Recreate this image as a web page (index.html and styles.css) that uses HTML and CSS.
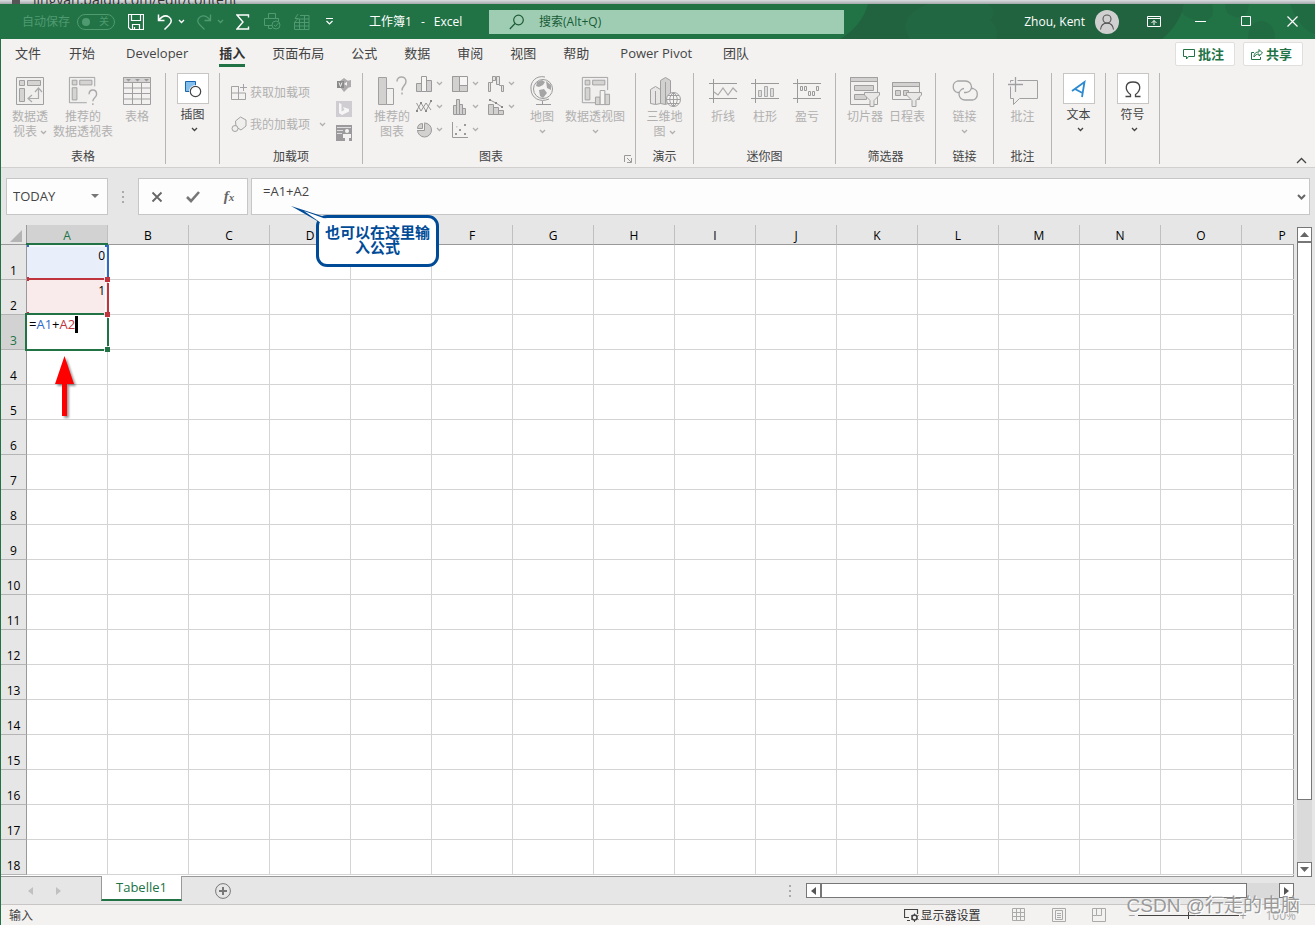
FILE: index.html
```html
<!DOCTYPE html>
<html lang="zh-CN">
<head>
<meta charset="utf-8">
<title>工作簿1 - Excel</title>
<link rel="stylesheet" href="styles.css">
</head>
<body>
<svg class="defs" aria-hidden="true">
  <symbol id="chev" viewBox="0 0 7 5"><path d="M1 1l2.500 2.500L6 1" fill="none" stroke="currentColor" stroke-width="1.300"/></symbol>
  <symbol id="funnel" viewBox="0 0 16 15"><path d="M.5.5h15v2.500l-5.500 5.500v6H6v-6L.5 3z" fill="#e9e8e7" stroke="#a3a3a3"/></symbol>
</svg>
<div class="backdrop"><i></i><span>jingyan.baidu.com/edit/content</span></div>

<header class="titlebar">
  <svg class="pattern" viewBox="0 0 475 35" preserveAspectRatio="xMaxYMid slice" aria-hidden="true"><path d="M0 35Q22 22 28 0h316q-4 20-22 35z" fill="#21633f"/><path d="M70 35q-14-22 18-35h60q10 8 2 16 10 10 6 19z" fill="#216b42" opacity=".6"/><path d="M340 0h32q5 20-15 16-17-2-17-16zM385 0h24q-2 16-14 13-10-2-10-13zM408 35q0-18 14-18 13 2 13 18zM450 0h25v30q-15-4-25-30z" fill="#21633f" opacity=".5"/></svg>
  <span class="autosave">自动保存</span>
  <button class="toggle" aria-label="自动保存"><i></i>关</button>
  <div class="quick">
    <button aria-label="保存"><svg width="16" height="16" fill="none" stroke="#fff"><path d="M.5.500h15v15h-13l-2-2zM3.500.500v6h9v-6M4.500 15.500v-5h7v5M6.500 15v-2" stroke-width="1.200"/></svg></button>
    <button aria-label="撤消"><svg width="16" height="16" fill="none" stroke="#fff" stroke-width="1.500"><path d="M1.500.500v6h6M1.500 6.500C5 2 9 1 12 3c3 2 3 5 0 8l-4.500 4.500"/></svg></button>
    <button aria-label="撤消列表"><svg width="7" height="5"><use href="#chev"/></svg></button>
    <button class="off" aria-label="恢复"><svg width="16" height="16" fill="none" stroke="currentColor" stroke-width="1.300"><path d="M14.500.500v6h-6M14.500 6.500C11 2 7 1 4 3c-3 2-3 5 0 8l4.500 4.500"/></svg></button>
    <button class="off" aria-label="恢复列表"><svg width="7" height="5"><use href="#chev"/></svg></button>
    <button aria-label="求和"><svg width="14" height="16" fill="none" stroke="#fff" stroke-width="1.400"><path d="M12.500 3.500V1H1l6 7-6 7h11.500v-2.500"/></svg></button>
    <button class="off" aria-label="打印预览"><svg width="17" height="17" fill="none" stroke="currentColor"><path d="M4.500 5.500v-5h7v5M8 12.500H.500v-7h14v3M4.500 12v3.500H8"/><circle cx="12" cy="12" r="4"/><path d="M10 12l1.500 1.500L14.500 10"/></svg></button>
    <button class="off" aria-label="表格"><svg width="17" height="16" fill="none" stroke="currentColor"><path d="M7 1.500h9v14H1.500V9M1.500 8.500H16M5 5h11M1.500 12H16M6.500 5v10.500M11.500 1.500v14M5 0L2 4.500h3L1 9"/></svg></button>
    <button aria-label="自定义快速访问工具栏"><svg width="9" height="7" fill="none" stroke="#fff"><path d="M1 .500h7M1.500 3l3 3 3-3" stroke-width="1.200"/></svg></button>
  </div>
  <h1 class="doc"><span>工作簿1</span><span>-</span><span>Excel</span></h1>
  <label class="search"><svg width="16" height="16" fill="none" stroke="#1d5c37" stroke-width="1.200"><circle cx="9.500" cy="6" r="4.800"/><path d="M6 9.500L.800 15"/></svg><input type="text" aria-label="搜索" placeholder="搜索(Alt+Q)"></label>
  <div class="user"><span>Zhou, Kent</span><svg width="24" height="24"><circle cx="12" cy="12" r="12" fill="#d0d0d0"/><g fill="none" stroke="#555" stroke-width="1.100"><circle cx="12" cy="9" r="4"/><path d="M5.500 19.500c1-8.500 12-8.500 13 0"/></g></svg></div>
  <div class="winbtns">
    <button aria-label="功能区显示选项"><svg width="14" height="12" fill="none" stroke="#fff"><path d="M.500.500h13v10H.500zM.500 2.500h13M7 9V4.500M4.500 7L7 4.500 9.500 7"/></svg></button>
    <button aria-label="最小化"><svg width="11" height="11" stroke="#fff"><path d="M0 5.500h11"/></svg></button>
    <button aria-label="最大化"><svg width="11" height="11" fill="none" stroke="#fff"><path d="M.500.500h9v9h-9z"/></svg></button>
    <button aria-label="关闭"><svg width="11" height="11" stroke="#fff"><path d="M.500.500l10 10M10.500.500l-10 10" stroke-width="1.200"/></svg></button>
  </div>
</header>

<main class="app">
  <nav class="tabs">
    <button>文件</button><button>开始</button><button>Developer</button><button class="active">插入</button><button>页面布局</button><button>公式</button><button>数据</button><button>审阅</button><button>视图</button><button>帮助</button><button>Power Pivot</button><button>团队</button>
    <div class="share">
      <button><svg width="12" height="12" fill="none" stroke="#217346"><path d="M.500 1.500h11v7H5.500L3.500 11V8.500h-3z"/></svg>批注</button>
      <button><svg width="12" height="12" fill="none" stroke="#217346"><path d="M3 4.500H.500v7h9V9M3 9c0-4 2-5 5-5V1.500L11.500 5 8 8V6C6 6 4 7 3 9z"/></svg>共享</button>
    </div>
  </nav>

  <section class="ribbon">
    <div class="group g-table">
      <div class="tools">
        <button class="big w44"><svg width="30" height="30" fill="#d5d4d3" stroke="#a0a0a0"><path d="M1.500 1.500h27v27h-27z" fill="#f0efee"/><path d="M4.500 4.500h5v5h-5zM12.500 4.500h13v5h-13zM4.500 12.500h5v13h-5z"/><path d="M14 22.500h9.500V13M17 19l-4 3.500 4 3.500M20 16l3.500-4 3.500 4" fill="none" stroke="#aaa" stroke-width="1.200"/></svg><span>数据透<br>视表 <svg width="7" height="5"><use href="#chev"/></svg></span></button>
        <button class="big w62"><svg width="32" height="32" viewBox="0 0 32 32" fill="#d5d4d3" stroke="#a0a0a0"><path d="M28.500 11V1.500h-27v27H20" fill="#f0efee"/><path d="M4.500 4.500h5v5h-5zM12.500 4.500h13v5h-13zM4.500 12.500h5v13h-5z"/><path d="M22.500 19.500c0-6 8-6 8 0 0 4-4 3.500-4 7.500M26.500 29v2" fill="none" stroke="#aaa" stroke-width="1.500"/></svg><span>推荐的<br>数据透视表</span></button>
        <button class="big w46"><svg width="30" height="30" fill="none" stroke="#a0a0a0"><path d="M1.500 1.500h27v27h-27z" fill="#f2f1f0"/><path d="M1.500 1.500h27v5h-27z" fill="#d5d4d3"/><path d="M1.500 12h27M1.500 17.500h27M1.500 23h27M10.500 7v21.500M19.500 7v21.500"/><path d="M4 3h5L6.500 5.500zM13 3h5l-2.500 2.500zM22 3h5l-2.500 2.500z" fill="#999" stroke="none"/></svg><span>表格</span></button>
      </div>
      <h2>表格</h2>
    </div>
    <div class="group folded">
      <button><i><svg width="18" height="18"><path d="M1.500 1.500h10v10h-10z" fill="#83beec" stroke="#1765b1"/><circle cx="11.500" cy="11.500" r="6.500" fill="#fff"/><circle cx="11.500" cy="11.500" r="5.200" fill="none" stroke="#444" stroke-width="1.200"/></svg></i><span>插图</span><svg width="7" height="5"><use href="#chev"/></svg></button>
    </div>
    <div class="group g-addin">
      <div class="tools">
        <div class="links">
          <button><svg width="17" height="17" fill="none" stroke="#a3a3a3"><path d="M8 2.500H.500v13h14V9M.500 9h14M7.500 2.500v13M12.500 0v7M9 3.500h7"/></svg>获取加载项</button>
          <button><svg width="17" height="17" fill="#f0efee" stroke="#a3a3a3"><path d="M4.500 5l5-4 5.500 3v6l-5 4-5-3z"/><circle cx="4" cy="12.500" r="3"/></svg>我的加载项<svg class="gap" width="7" height="5"><use href="#chev"/></svg></button>
        </div>
        <div class="apps">
          <button aria-label="Visio"><svg width="16" height="16"><path d="M8 1l4 3-4 3-4-3zM11 4l4-1v7l-4 1zM4 10l4-3 5 3-5 5z" fill="#adabab"/><path d="M1 4h7v7H1z" fill="#8a8a8a"/><path d="M3 5.500l1.500 4L6 5.500" fill="none" stroke="#eee"/></svg></button>
          <button aria-label="必应地图"><svg width="16" height="16"><path d="M0 0h16v16H0z" fill="#cfcdd1"/><path d="M3 2l2.500 1v7.500l3-1.500-1.500-3 6 2v2.500L6 14l-3-2z" fill="#f7f6f7"/></svg></button>
          <button aria-label="人员图"><svg width="16" height="16"><path d="M0 0h16v16H0z" fill="#9c9a9c"/><path d="M1 2.500h14M1 5.500h6M1 8.500h5" stroke="#ddd"/><circle cx="11" cy="6" r="2" fill="#f3f2f1"/><path d="M7 9h8v4h-2v3H9v-3H7z" fill="#f3f2f1"/></svg></button>
        </div>
      </div>
      <h2>加载项</h2>
    </div>
    <div class="group g-chart">
      <div class="tools">
        <button class="big w42"><svg width="30" height="30" fill="#d2d1d0" stroke="#a0a0a0"><path d="M1.500 1.500h8v27h-8z"/><path d="M9.500 12.500h7v16h-7z" fill="#f2f1f0"/><path d="M20 5.500c0-6 9-6 9 0 0 4-4 4-4 9M25 16.500v2" fill="none" stroke="#aaa" stroke-width="1.500"/></svg><span>推荐的<br>图表</span></button>
        <div class="minis">
          <button aria-label="柱形图"><svg width="16" height="16" fill="#d2d1d0" stroke="#9a9a9a"><path d="M.500 7.500h5v8h-5zM10.500 4.500h5v11h-5z"/><path d="M5.500.500h5v15h-5z" fill="#f6f5f4"/></svg><svg width="7" height="5"><use href="#chev"/></svg></button>
          <button aria-label="层次结构图"><svg width="16" height="16" fill="#d2d1d0" stroke="#9a9a9a"><path d="M.500.500h15v15H.500z" fill="#f6f5f4"/><path d="M.500.500h7v15h-7zM7.500 9.500h8v6h-8z"/></svg><svg width="7" height="5"><use href="#chev"/></svg></button>
          <button aria-label="瀑布图"><svg width="16" height="16" fill="#e4e3e2" stroke="#9a9a9a"><path d="M.500 6.500h2v9h-2zM4.500.500h3v4h-3zM8.500.500h3v8h-3zM13.500 9.500h2v6h-2z"/><path d="M2.500 6.500h2v-6M11.500 8.500v1h2" fill="none"/></svg><svg width="7" height="5"><use href="#chev"/></svg></button>
          <button aria-label="折线图"><svg width="16" height="16" fill="none" stroke="#969696"><path d="M.500 12L5 4l5 8 5-10M.500 4L5 12l5-8 5 7" /><path d="M4 3h2v2H4zM9 11h2v2H9zM14 1h2v2h-2zM0 11h2v2H0z" fill="#888" stroke="none"/></svg><svg width="7" height="5"><use href="#chev"/></svg></button>
          <button aria-label="统计图"><svg width="16" height="16" fill="#d2d1d0" stroke="#9a9a9a"><path d="M1.500 6.500h3v9h-3zM4.500.500h3v15h-3zM7.500 5.500h3v10h-3zM10.500 9.500h3v6h-3z"/></svg><svg width="7" height="5"><use href="#chev"/></svg></button>
          <button aria-label="组合图"><svg width="16" height="16" fill="#d2d1d0" stroke="#9a9a9a"><path d="M.500 5.500h5v10h-5zM5.500 8.500h5v7h-5zM10.500 11.500h5v4h-5z"/><path d="M2 1l6 3 6 4" fill="none"/><path d="M1 0h2v2H1zM7 3h2v2H7zM13 7h2v2h-2z" fill="#888" stroke="none"/></svg><svg width="7" height="5"><use href="#chev"/></svg></button>
          <button aria-label="饼图"><svg width="16" height="16" fill="#d2d1d0" stroke="#9a9a9a"><circle cx="8.500" cy="8" r="7"/><path d="M0 8V0h8v8z" fill="#f3f2f1" stroke="none"/><path d="M1.500 6.500c0-3 2-5 5-5v5z"/><path d="M1.500 8.500h7v-7" fill="none"/></svg><svg width="7" height="5"><use href="#chev"/></svg></button>
          <button aria-label="散点图"><svg width="16" height="16"><path d="M.500 0v15.500H16" fill="none" stroke="#9a9a9a"/><path d="M3 11h2v2H3zM12 2h2v2h-2zM12 11h2v2h-2zM7 7h2v2H7z" fill="#999"/><path d="M4 4h1.500v1.500H4z" fill="#ccc"/></svg><svg width="7" height="5"><use href="#chev"/></svg></button>
        </div>
        <button class="big w36"><svg width="26" height="30" fill="none" stroke="#9a9a9a"><circle cx="14" cy="13" r="9.500" fill="#f4f3f2"/><path d="M8 6l5-2 3 2-2 3-4 2-3-1zM17 5l5 4v5l-4-2zM10 14l5-1 3 4-4 5-3-2z" fill="#a5a5a5" stroke="none"/><path d="M16 1C7-1 1 6 2 13c0 9 9 14 18 10M13.500 25v3M7 28.500h15"/></svg><span>地图</span><svg width="7" height="5"><use href="#chev"/></svg></button>
        <button class="big w70"><svg width="32" height="32" viewBox="-1 0 32 32" fill="#d5d4d3" stroke="#a0a0a0"><path d="M28.500 15V1.500h-27v27H15" fill="#f0efee"/><path d="M4.500 4.500h5v5h-5zM12.500 4.500h13v5h-13zM4.500 12.500h5v13h-5zM15.500 22.500h5v8h-5zM25.500 19.500h5v11h-5z"/><path d="M20.500 15.500h5v15h-5z" fill="#f5f4f3"/></svg><span>数据透视图</span><svg width="7" height="5"><use href="#chev"/></svg></button>
      </div>
      <h2>图表</h2>
      <button class="launcher" aria-label="图表设置"><svg width="8" height="8" fill="none" stroke="#999"><path d="M7 .500H.500V7M3 3l4 4M7.500 3v4.500H3"/></svg></button>
    </div>
    <div class="group">
      <div class="tools center"><button class="big w42"><svg width="32" height="32" fill="#d2d1d0" stroke="#a0a0a0"><path d="M1.500 13.500l5-3 5 3v14l-5 1-5-1z" fill="#e7e6e5"/><path d="M11.500 4.500l5-3 5 3v22l-5 2-5-1zM6.500 15v13M16.500 6v22"/><circle cx="24.500" cy="23.500" r="7" fill="#f6f5f4"/><path d="M17.500 23.500h14M24.500 16.500v14M19 19.500h11M19 27.500h11M24.500 16.500c-5 4-5 10 0 14 5-4 5-10 0-14" fill="none"/></svg><span>三维地<br>图 <svg width="7" height="5"><use href="#chev"/></svg></span></button></div>
      <h2>演示</h2>
    </div>
    <div class="group g-spark">
      <div class="tools">
        <button class="big w42"><svg width="30" height="30" fill="none" stroke="#9a9a9a"><path d="M1 7.500h28M1 22.500h28M5.500 3v24"/><path d="M6 16l4 3 5-7 5 7 5-7 4 4" stroke="#aaa" stroke-width="1.200"/></svg><span>折线</span></button>
        <button class="big w42"><svg width="30" height="30" fill="#ddd" stroke="#9a9a9a"><path d="M1 7.500h28M1 22.500h28M5.500 3v24"/><path d="M8.500 14.500h3v6h-3zM14.500 10.500h3v10h-3zM20.500 12.500h3v8h-3z" stroke="#aaa"/></svg><span>柱形</span></button>
        <button class="big w42"><svg width="30" height="30" fill="none" stroke="#9a9a9a"><path d="M1 7.500h28M1 22.500h28M5.500 3v24"/><path d="M8.500 10.500h2v4h-2zM12.500 10.500h2v4h-2zM16.500 15.500h2v4h-2zM20.500 15.500h2v4h-2zM24.500 10.500h2v4h-2z"/></svg><span>盈亏</span></button>
      </div>
      <h2>迷你图</h2>
    </div>
    <div class="group g-spark">
      <div class="tools">
        <button class="big w42"><svg width="32" height="32" fill="#d2d1d0" stroke="#a0a0a0"><path d="M1.500 1.500h27v27h-27z" fill="#f1f0ef"/><path d="M1.500 1.500h27v4h-27zM5.500 9.500h19v5h-19zM5.500 18.500h12v5h-12z"/><use href="#funnel" x="15" y="16" width="16" height="15"/></svg><span>切片器</span></button>
        <button class="big w42"><svg width="32" height="32" fill="#d2d1d0" stroke="#a0a0a0"><path d="M1.500 6.500h27v17h-27z" fill="#f1f0ef"/><path d="M1.500 6.500h27v4h-27zM4.500 14.500h5v5h-5zM12.500 14.500h5v5h-5z"/><use href="#funnel" x="15" y="16" width="16" height="15"/></svg><span>日程表</span></button>
      </div>
      <h2>筛选器</h2>
    </div>
    <div class="group">
      <div class="tools center"><button class="big w42"><svg width="30" height="30" fill="none" stroke="#a5a5a5" stroke-width="1.300"><path d="M9 16.500H7.500a6 6 0 010-11.500h8a6 6 0 016 6 5.500 5.500 0 01-5.500 5.500h-2M14 12.500a6 6 0 00-5 6 6 6 0 006 5.500h8a6 6 0 000-11.500h-1.500"/></svg><span>链接</span><svg width="7" height="5"><use href="#chev"/></svg></button></div>
      <h2>链接</h2>
    </div>
    <div class="group">
      <div class="tools center"><button class="big w42"><svg width="32" height="30" fill="none" stroke="#a0a0a0"><path d="M3.500 4.500h27v18h-18l-6 6v-6h-3z" fill="#f0efee"/><path d="M1 8.500h15M8.500 1v15" stroke="#f3f2f1" stroke-width="4"/><path d="M1 8.500h15M8.500 1v15" stroke-width="1.300"/></svg><span>批注</span></button></div>
      <h2>批注</h2>
    </div>
    <div class="group folded"><button><i><svg width="16" height="18" fill="none" stroke="#2b8ad0" stroke-width="1.800"><path d="M1 11L13.500 2 11 17M4 9l7.500 4"/></svg></i><span>文本</span><svg width="7" height="5"><use href="#chev"/></svg></button></div>
    <div class="group folded"><button><i><svg width="16" height="18" fill="none" stroke="#444" stroke-width="1.300"><path d="M.500 16.500h5v-2C-.500 10-.500 2 8 2s8.500 8 2.500 12.500v2h5"/></svg></i><span>符号</span><svg width="7" height="5"><use href="#chev"/></svg></button></div>
    <button class="collapse" aria-label="折叠功能区"><svg width="11" height="7" fill="none" stroke="#444" stroke-width="1.300"><path d="M1 6l4.500-4.500L10 6"/></svg></button>
  </section>

  <section class="formulabar">
    <div class="box name"><input type="text" aria-label="名称框" value="TODAY"><svg width="8" height="5"><path d="M0 0h8L4 4z" fill="#777"/></svg></div>
    <svg class="grip" width="2" height="12" fill="#aaa"><path d="M0 0h2v2H0zM0 5h2v2H0zM0 10h2v2H0z"/></svg>
    <div class="box fx">
      <button aria-label="取消"><svg width="12" height="12" stroke="#666" stroke-width="1.800"><path d="M1.500 1.500l9 9M10.500 1.500l-9 9"/></svg></button>
      <button aria-label="输入"><svg width="14" height="12" fill="none" stroke="#777" stroke-width="2.600"><path d="M1 6l4 4 8-9"/></svg></button>
      <button aria-label="插入函数"><em>f<small>x</small></em></button>
    </div>
    <div class="box formula"><input type="text" aria-label="编辑栏" value="=A1+A2"><svg width="9" height="6" fill="none" stroke="#666" stroke-width="2"><path d="M1 1l3.500 3.500L8 1"/></svg></div>
  </section>

  <section class="sheet">
    <div class="gridwrap">
      <table class="grid">
        <thead><tr><th class="corner" aria-label="全选"><svg width="12" height="12"><path d="M12 0v12H0z" fill="#b4b4b4"/></svg></th><th class="sel">A</th><th>B</th><th>C</th><th>D</th><th>E</th><th>F</th><th>G</th><th>H</th><th>I</th><th>J</th><th>K</th><th>L</th><th>M</th><th>N</th><th>O</th><th>P</th></tr></thead>
        <tbody>
        <tr><th>1<td class="num blue">0<td><td><td><td><td><td><td><td><td><td><td><td><td><td><td>
        <tr><th>2<td class="num red">1<td><td><td><td><td><td><td><td><td><td><td><td><td><td><td>
        <tr><th class="sel">3<td class="edit">=<b>A1</b>+<s>A2</s><i></i><td><td><td><td><td><td><td><td><td><td><td><td><td><td><td>
        <tr><th>4<td><td><td><td><td><td><td><td><td><td><td><td><td><td><td><td>
        <tr><th>5<td><td><td><td><td><td><td><td><td><td><td><td><td><td><td><td>
        <tr><th>6<td><td><td><td><td><td><td><td><td><td><td><td><td><td><td><td>
        <tr><th>7<td><td><td><td><td><td><td><td><td><td><td><td><td><td><td><td>
        <tr><th>8<td><td><td><td><td><td><td><td><td><td><td><td><td><td><td><td>
        <tr><th>9<td><td><td><td><td><td><td><td><td><td><td><td><td><td><td><td>
        <tr><th>10<td><td><td><td><td><td><td><td><td><td><td><td><td><td><td><td>
        <tr><th>11<td><td><td><td><td><td><td><td><td><td><td><td><td><td><td><td>
        <tr><th>12<td><td><td><td><td><td><td><td><td><td><td><td><td><td><td><td>
        <tr><th>13<td><td><td><td><td><td><td><td><td><td><td><td><td><td><td><td>
        <tr><th>14<td><td><td><td><td><td><td><td><td><td><td><td><td><td><td><td>
        <tr><th>15<td><td><td><td><td><td><td><td><td><td><td><td><td><td><td><td>
        <tr><th>16<td><td><td><td><td><td><td><td><td><td><td><td><td><td><td><td>
        <tr><th>17<td><td><td><td><td><td><td><td><td><td><td><td><td><td><td><td>
        <tr><th>18<td><td><td><td><td><td><td><td><td><td><td><td><td><td><td><td>
        </tbody>
      </table>
      <svg class="ranges" width="86" height="110" aria-hidden="true">
        <path d="M1 0h82v2H1z" fill="#217346"/>
        <path d="M3 3h78M80.500 3v101" stroke="#fff" fill="none"/>
        <path d="M82 3h2v31h-2zM80 2h4v2h-4zM2 2h2v2H2z" fill="#316ac5"/>
        <path d="M4 35h75v2H4zM2 34h2v4H2zM80 34h5v5h-5zM82 40h2v29h-2zM80 69h5v5h-5zM2 69h2v2H2z" fill="#c0343e"/>
        <path d="M0 70h79v2H2v34h77v2H0zM82 75h2v28h-2zM80 104h5v5h-5z" fill="#217346"/>
      </svg>
      <svg class="arrow" width="30" height="68" aria-hidden="true"><path d="M14.500 3L24 31h-7v32h-5V31H5z" fill="#f00"/></svg>
      <div class="callout"><svg width="38" height="20" aria-hidden="true"><path d="M1 2l34 11-6 5z" fill="#004b97"/><path d="M14 7l22 8-5 4z" fill="#fff"/></svg>也可以在这里输入公式</div>
    </div>
    <div class="vscroll">
      <button aria-label="向上滚动"><svg width="9" height="5"><path d="M0 5h9L4.500 0z" fill="#666"/></svg></button>
      <div class="track"><div class="thumb"></div></div>
      <button aria-label="向下滚动"><svg width="9" height="5"><path d="M0 0h9L4.500 5z" fill="#666"/></svg></button>
    </div>
  </section>

  <section class="sheetbar">
    <div class="nav"><button aria-label="上一张"><svg width="5" height="8"><path d="M5 0v8L0 4z" fill="#c0c0c0"/></svg></button><button aria-label="下一张"><svg width="5" height="8"><path d="M0 0v8l5-4z" fill="#c0c0c0"/></svg></button></div>
    <button class="tab">Tabelle1</button>
    <button class="add" aria-label="新工作表"><svg width="16" height="16" fill="none" stroke="#777"><circle cx="8" cy="8" r="7.400"/><path d="M8 4v8M4 8h8" stroke-width="2"/></svg></button>
    <svg class="grip" width="2" height="12" fill="#aaa"><path d="M0 0h2v2H0zM0 5h2v2H0zM0 10h2v2H0z"/></svg>
    <div class="hscroll">
      <button aria-label="向左滚动"><svg width="5" height="8"><path d="M5 0v8L0 4z" fill="#555"/></svg></button>
      <div class="track"><div class="thumb"></div></div>
      <button aria-label="向右滚动"><svg width="5" height="8"><path d="M0 0v8l5-4z" fill="#555"/></svg></button>
    </div>
  </section>

  <footer class="status">
    <span>输入</span>
    <button class="display"><svg width="15" height="14" fill="none" stroke="#444"><path d="M5 9.500H.500v-8h13V6M3 12.500h3" stroke-width="1.200"/><circle cx="10.500" cy="9.500" r="2.500" stroke-width="1.500"/><path d="M10.500 5.500v2M10.500 12v2M7 7.500l1.500 1M13 10.500l1.500 1M7 11.500l1.500-1M13 8.500l1.500-1"/></svg>显示器设置</button>
    <button aria-label="普通"><svg width="14" height="14" fill="none" stroke="#aaa"><path d="M.500.500h12v12H.500zM.500 4.500h12M.500 8.500h12M4.500.500v12M8.500.500v12"/></svg></button>
    <button aria-label="页面布局"><svg width="14" height="14" fill="none" stroke="#aaa"><path d="M.500.500h13v13H.500zM3.500 2.500h7v9h-7zM5 5.500h4M5 7.500h4M5 9.500h4"/></svg></button>
    <button aria-label="分页预览"><svg width="14" height="14" fill="none" stroke="#aaa"><path d="M.500.500h13v13H.500zM4.500.500v7h5v-7M.500 7.500h4"/></svg></button>
    <div class="zoom"><button aria-label="缩小">−</button><input type="range" aria-label="缩放" min="10" max="190" value="100"><button aria-label="放大">+</button><span>100%</span></div>
  </footer>
  <div class="watermark">CSDN @行走的电脑</div>
</main>
</body>
</html>
```

FILE: styles.css
```css
* { box-sizing: border-box; }
body {
  margin: 0;
  min-height: 100vh;
  display: flex;
  flex-direction: column;
  background: #e6e6e6;
  color: #444;
  font: 12px/15px "Open Sans", "Noto Sans CJK SC", sans-serif;
}
button, input { font: inherit; color: inherit; background: none; border: 0; padding: 0; margin: 0; }
input { min-width: 0; outline: 0; }
h1, h2 { margin: 0; font: inherit; }
svg { flex: none; }
.defs { position: absolute; width: 0; height: 0; }

.backdrop {
  height: 4px;
  overflow: hidden;
  display: flex;
  align-items: flex-end;
  gap: 13px;
  padding-left: 12px;
  background: linear-gradient(#dcdfe2, #a4a8aa);
  color: #333;
  font-size: 14px;
  line-height: 8px;
}
.backdrop i { width: 8px; height: 4px; background: #555; }

/* Title bar */
.titlebar {
  position: relative;
  height: 35px;
  display: flex;
  align-items: center;
  background: #217346;
  color: #fff;
  padding-left: 22px;
}
.titlebar > * { position: relative; }
.titlebar .pattern { position: absolute; right: 0; top: 0; width: 475px; height: 35px; }
.titlebar button { display: flex; align-items: center; }
.autosave { color: #4f9a70; width: 55px; white-space: nowrap; }
.toggle {
  width: 38px;
  height: 16px;
  border: 1px solid #4f9a70;
  border-radius: 8px;
  color: #4f9a70;
  justify-content: space-between;
  padding: 0 5px 0 4px;
  font-size: 10px;
}
.toggle i { width: 8px; height: 8px; border-radius: 50%; background: #4f9a70; }
.quick { display: flex; align-items: center; margin-left: 13px; width: 241px; }
.quick .off { color: #4f9a70; }
.quick button:nth-child(2) { margin-left: 13px; }
.quick button:nth-child(3) { margin-left: 5px; }
.quick button:nth-child(4) { margin-left: 11px; }
.quick button:nth-child(5) { margin-left: 5px; }
.quick button:nth-child(6) { margin-left: 12px; }
.quick button:nth-child(7) { margin-left: 14px; }
.quick button:nth-child(8) { margin-left: 12px; }
.quick button:nth-child(9) { margin-left: 15px; }
.doc { display: flex; gap: 9px; width: 120px; white-space: nowrap; }
.search {
  flex: 1;
  display: flex;
  align-items: center;
  gap: 14px;
  height: 24px;
  padding-left: 20px;
  background: #9fcdb3;
}
.search input { flex: 1; }
.search input::placeholder { color: #185c37; opacity: 1; }
.user { display: flex; align-items: center; gap: 10px; margin-left: 180px; white-space: nowrap; }
.winbtns { display: flex; margin-left: 12px; }
.winbtns button { width: 46px; height: 35px; justify-content: center; }

/* Ribbon */
.app { position: relative; flex: 1; display: flex; flex-direction: column; border-left: 1px solid #217346; }
.tabs { display: flex; height: 31px; background: #f3f2f1; padding-left: 14px; font-size: 13px; gap: 27px; white-space: nowrap; }
.tabs > button { height: 28px; border-bottom: 3px solid transparent; padding-top: 3px; }
.tabs > button.active { font-weight: 700; border-color: #217346; color: #333; }
.tabs > button:nth-child(2) { margin-left: 1px; }
.tabs > button:nth-child(3), .tabs > button:nth-child(4), .tabs > button:nth-child(11), .tabs > button:nth-child(12) { margin-left: 4px; }
.share { margin-left: auto; display: flex; gap: 8px; padding: 3px 12px 0 0; }
.share button {
  display: flex;
  align-items: center;
  gap: 3px;
  height: 24px;
  padding: 0 7px;
  width: 60px;
  background: #fff;
  border: 1px solid #e1dfdd;
  border-radius: 2px;
  color: #217346;
  font-weight: 700;
}
.ribbon {
  position: relative;
  display: grid;
  grid-template-columns: 165px 54px 143px 273px 58px 142px 100px 58px 58px 54px 54px 1fr;
  height: 98px;
  padding: 3px 0;
  background: #f3f2f1;
  border-bottom: 1px solid #d2d0ce;
  color: #b1b0af;
}
.group { position: relative; border-right: 1px solid #b8b6b5; height: 91px; display: flex; flex-direction: column; }
.group h2 { color: #444; text-align: center; height: 15px; }
.tools { flex: 1; display: flex; padding-left: 7px; }
.tools.center { justify-content: center; padding: 0; }
.g-chart .tools, .g-spark .tools { padding-left: 8px; }
.g-chart h2 { padding-right: 16px; }
.big { display: flex; flex-direction: column; align-items: center; padding-top: 3px; white-space: nowrap; }
.big > svg:first-child { height: 30px; margin-bottom: 3px; overflow: visible; }
.big > span + svg { margin-top: 5px; }
.big span svg { vertical-align: 1px; }
.w36 { width: 36px; }
.w42 { width: 42px; }
.w44 { width: 44px; }
.w46 { width: 46px; }
.w62 { width: 62px; }
.w70 { width: 70px; }
.folded { color: #444; }
.folded button { display: flex; flex-direction: column; align-items: center; }
.folded i { width: 32px; height: 31px; display: grid; place-items: center; background: #fff; border: 1px solid #c8c6c4; }
.folded span { margin: 3px 0 5px; }
.folded button > svg { margin-left: 3px; }
.links { display: flex; flex-direction: column; gap: 15px; padding: 11px 0 0 4px; width: 104px; }
.links button { display: flex; align-items: center; gap: 2px; height: 17px; white-space: nowrap; }
.links .gap { margin-left: 7px; }
.apps { display: flex; flex-direction: column; gap: 8px; padding-top: 4px; margin-left: 5px; }
.apps button, .minis button { display: flex; align-items: center; }
.minis { display: grid; grid-template-columns: repeat(3, 36px); grid-auto-rows: 23px; margin: -1px 0 0 3px; }
.minis button { gap: 4px; }
.launcher { position: absolute; right: 3px; bottom: 1px; display: flex; }
.collapse { position: absolute; right: 8px; bottom: 3px; display: flex; }

/* Formula bar */
.formulabar { display: flex; align-items: center; height: 57px; padding: 0 5px; }
.box { display: flex; align-items: center; height: 37px; background: #fdfdfd; border: 1px solid #c6c6c6; }
.name { width: 102px; padding: 0 8px 0 6px; }
.name input { flex: 1; font-size: 13px; }
.formulabar .grip { margin: 0 14px; }
.fx { width: 110px; margin-right: 3px; }
.fx button { flex: 1; display: grid; place-items: center; }
.fx em { font: italic 700 15px/15px "Liberation Serif", serif; color: #666; }
.fx small { font-size: 11px; }
.formula { flex: 1; padding: 0 3px 0 11px; }
.formula input { flex: 1; align-self: flex-start; margin-top: 5px; font-size: 13px; }

/* Worksheet */
.sheet { flex: 1 0 0; display: flex; min-height: 652px; }
.gridwrap {
  position: relative;
  flex: 1 1 0;
  min-width: 0;
  border-right: 1px solid #999;
  border-bottom: 1px solid #999;
  background: #fff;
  clip-path: inset(-40px 0 0 0);
}
.grid { table-layout: fixed; width: 1322px; border-collapse: separate; border-spacing: 0; color: #000; font-size: 13px; line-height: 17px; }
.grid th, .grid td { height: 35px; padding: 0; border-right: 1px solid #d4d4d4; border-bottom: 1px solid #d4d4d4; vertical-align: top; }
.grid th { font-weight: 400; background: #e6e6e6; }
.grid thead th { height: 20px; width: 81px; border-color: #999; border-right-color: #c0c0c0; padding-top: 2px; font-size: 12px; }
.grid thead .corner { width: 26px; padding: 5px 0 0 9px; line-height: 0; border-right-color: #999; text-align: left; }
.grid tbody th { vertical-align: bottom; border-color: #b4b4b4; border-right-color: #999; font-size: 12px; }
.grid th.sel { background: #d2d2d2; color: #217346; }
.grid .num { text-align: right; padding: 2px 2px 0 0; font-size: 12px; }
.grid .blue { background: #e9effa; }
.grid .red { background: #f9ebeb; }
.grid .edit { padding: 1px 0 0 2px; white-space: nowrap; }
.edit b { font-weight: 400; color: #316ac5; }
.edit s { text-decoration: none; color: #c0343e; }
.edit i { display: inline-block; width: 3px; height: 17px; background: #000; vertical-align: top; }
.ranges { position: absolute; left: 24px; top: 18px; }
.arrow { position: absolute; left: 49px; top: 128px; filter: drop-shadow(2px 2px 1px #0006); }
.callout {
  position: absolute;
  left: 315px;
  top: -10px;
  width: 123px;
  height: 52px;
  padding: 6px 4px;
  border: 3px solid #004b97;
  border-radius: 11px;
  background: #fff;
  color: #004b97;
  font: 700 15px/15px "Noto Sans CJK SC", sans-serif;
  text-align: center;
}
.callout svg { position: absolute; left: -29px; top: -14px; }
.vscroll { width: 21px; padding: 2px 3px 0; display: flex; flex-direction: column; }
.vscroll button, .hscroll button { width: 15px; height: 15px; flex: none; display: grid; place-items: center; background: #fff; border: 1px solid #777; }
.track { flex: 1; background: #dadada; display: flex; }
.thumb { background: #fff; border: 1px solid #777; }
.vscroll .thumb { width: 15px; height: 90%; }

/* Sheet tabs and status bar */
.sheetbar { display: flex; height: 28px; border-bottom: 1px solid #c8c6c4; padding-right: 21px; }
.nav { display: flex; gap: 23px; padding-left: 27px; width: 100px; align-items: center; }
.nav button, .add { display: flex; }
.tab {
  width: 81px;
  height: 25px;
  margin-top: -1px;
  z-index: 1;
  background: #fff;
  border: 1px solid #999;
  border-top: 0;
  border-bottom: 2px solid #217346;
  color: #217346;
  font-size: 13px;
}
.add { align-self: center; margin-left: 33px; }
.sheetbar .grip { align-self: center; margin: 0 15px 0 auto; }
.hscroll { display: flex; width: 488px; margin-top: 6px; height: 15px; }
.hscroll .thumb { width: 93%; }
.status { display: flex; align-items: center; height: 20px; background: #f3f2f1; padding: 0 19px 0 8px; white-space: nowrap; }
.status button { display: flex; margin-right: 26px; }
.status .display { margin: 0 32px 0 auto; gap: 1px; color: #333; align-items: center; }
.zoom { display: flex; align-items: center; color: #999; margin-left: -4px; }
.zoom button { margin: 0; width: 10px; }
.zoom input { appearance: none; width: 101px; height: 9px; background: linear-gradient(#444, #444) center / 100% 1px no-repeat; }
.zoom input::-webkit-slider-thumb { appearance: none; width: 1px; height: 7px; background: #444; }
.zoom span { margin-left: 16px; color: #aaa; }
.watermark { position: absolute; right: 15px; bottom: 6px; font: 19px/26px "Liberation Sans", "Noto Sans CJK SC", sans-serif; color: #999; text-shadow: 1px 1px 0 #fff; white-space: nowrap; pointer-events: none; }
```
